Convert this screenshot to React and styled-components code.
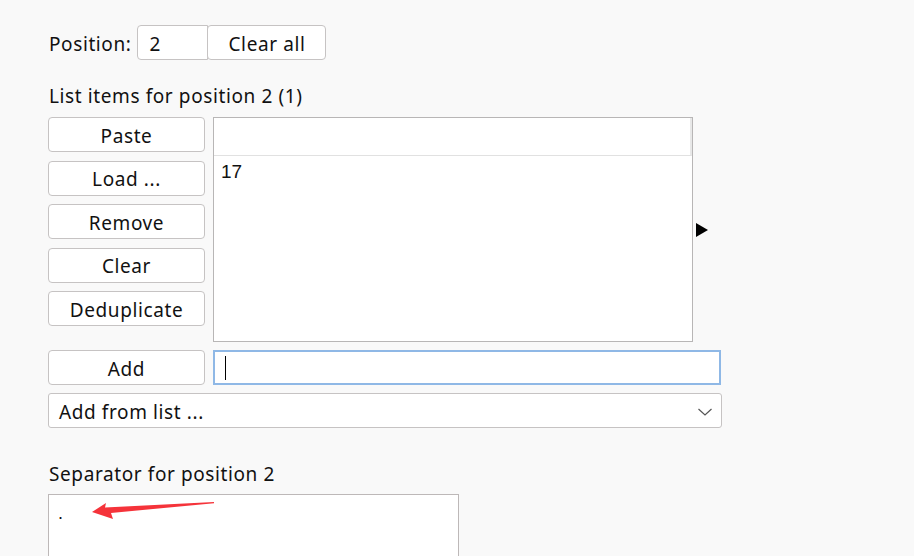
import React from "react";
import styled, { createGlobalStyle } from "styled-components";

const GlobalStyle = createGlobalStyle`
  html, body {
    margin: 0;
    padding: 0;
    background: #f9f9f9;
  }
  body {
    font-family: "Noto Sans", "Open Sans", sans-serif;
    color: #111;
    overflow: hidden;
  }
`;

const Page = styled.div`
  width: 914px;
  height: 556px;
  padding: 25px 0 0 48px;
  box-sizing: border-box;
  position: relative;
  overflow: hidden;
`;

const Row = styled.div`
  display: flex;
  align-items: ${(props) => props.align || "stretch"};
  gap: ${(props) => props.gap || 0}px;
  margin-top: ${(props) => props.top || 0}px;
`;

const Label = styled.div`
  font-size: 19px;
  letter-spacing: 0.6px;
  line-height: 24px;
  padding-left: 1px;
  margin-top: ${(props) => props.top || 0}px;
  margin-bottom: ${(props) => props.bottom || 0}px;
`;

const InlineLabel = styled(Label)`
  margin-right: 6px;
  padding-top: 2px;
`;

const Button = styled.button`
  font-family: "Noto Sans", "Open Sans", sans-serif;
  font-size: 19px;
  letter-spacing: 0.6px;
  color: #111;
  background: #fff;
  border: 1px solid #c6c3c3;
  border-radius: 4px;
  width: ${(props) => props.w || 157}px;
  height: ${(props) => props.h || 35}px;
  padding: 2px 0 0;
  margin: 0;
  margin-left: ${(props) => props.ml || 0}px;
  box-sizing: border-box;
  display: flex;
  align-items: center;
  justify-content: center;
`;

const NumberBox = styled.div`
  width: 71px;
  height: 35px;
  box-sizing: border-box;
  background: #fff;
  border: 1px solid #c6c3c3;
  border-radius: 4px 0 0 4px;
  font-size: 19px;
  display: flex;
  align-items: center;
  padding: 2px 0 0 11px;
`;

const ButtonColumn = styled.div`
  display: flex;
  flex-direction: column;
  gap: 8.5px;
  width: 157px;
`;

const ListWrap = styled.div`
  display: flex;
  align-items: center;
  gap: 3px;
`;

const ListBox = styled.div`
  width: 480px;
  height: 225px;
  box-sizing: border-box;
  background: #fff;
  border: 1px solid #b8b6b6;
`;

const ListHeader = styled.div`
  height: 37px;
  border-bottom: 1px solid #e1e1e1;
  border-right: 2px solid #e8e8e8;
`;

const ListItem = styled.div`
  font-family: "Liberation Sans", Arial, sans-serif;
  font-size: 19px;
  line-height: 32px;
  padding-left: 7px;
`;

const Arrow = styled.div`
  width: 0;
  height: 0;
  border-top: 7px solid transparent;
  border-bottom: 7px solid transparent;
  border-left: 12px solid #000;
  margin-top: 1px;
`;

const TextInput = styled.div`
  width: 508px;
  height: 35px;
  box-sizing: border-box;
  background: #fff;
  border: 2px solid #8fb8e6;
  display: flex;
  align-items: center;
  padding-left: 10px;
`;

const Caret = styled.div`
  width: 1px;
  height: 24px;
  background: #000;
`;

const Select = styled.div`
  width: 674px;
  height: 35px;
  box-sizing: border-box;
  background: #fff;
  border: 1px solid #c6c3c3;
  border-radius: 3px;
  display: flex;
  align-items: center;
  justify-content: space-between;
  padding: 2px 8px 0 10px;
  font-size: 19px;
  letter-spacing: 0.6px;
  margin-top: 8px;
`;

const TextArea = styled.div`
  position: relative;
  width: 411px;
  height: 70px;
  box-sizing: border-box;
  background: #fff;
  border: 1px solid #bdb8b8;
  font-family: "Liberation Sans", Arial, sans-serif;
  font-size: 18px;
  line-height: 24px;
  padding: 6px 0 0 9px;
`;

const Annotation = styled.svg`
  position: absolute;
  left: 43px;
  top: 7px;
`;

export default function App() {
  return (
    <>
      <GlobalStyle />
      <Page>
        <Row align="center">
          <InlineLabel>Position:</InlineLabel>
          <NumberBox>2</NumberBox>
          <Button w={119} h={35} ml={-1}>Clear all</Button>
        </Row>

        <Label top={24} bottom={9}>List items for position 2 (1)</Label>

        <Row gap={8}>
          <ButtonColumn>
            <Button>Paste</Button>
            <Button>Load ...</Button>
            <Button>Remove</Button>
            <Button>Clear</Button>
            <Button>Deduplicate</Button>
          </ButtonColumn>
          <ListWrap>
            <ListBox>
              <ListHeader />
              <ListItem>17</ListItem>
            </ListBox>
            <Arrow />
          </ListWrap>
        </Row>

        <Row gap={8} top={8}>
          <Button>Add</Button>
          <TextInput>
            <Caret />
          </TextInput>
        </Row>

        <Select>
          <span>Add from list ...</span>
          <svg width="16" height="10" viewBox="0 0 16 10">
            <path d="M1.5 2 L8 8 L14.5 2" fill="none" stroke="#555" strokeWidth="1.2" />
          </svg>
        </Select>

        <Label top={34} bottom={8}>Separator for position 2</Label>

        <TextArea>
          .
          <Annotation width="124" height="18" viewBox="0 0 124 18">
            <path d="M0 10 L14 1 L13 5.5 L122 0 L122 1.2 L19 11 L21 17 Z" fill="#f5333a" />
          </Annotation>
        </TextArea>
      </Page>
    </>
  );
}
